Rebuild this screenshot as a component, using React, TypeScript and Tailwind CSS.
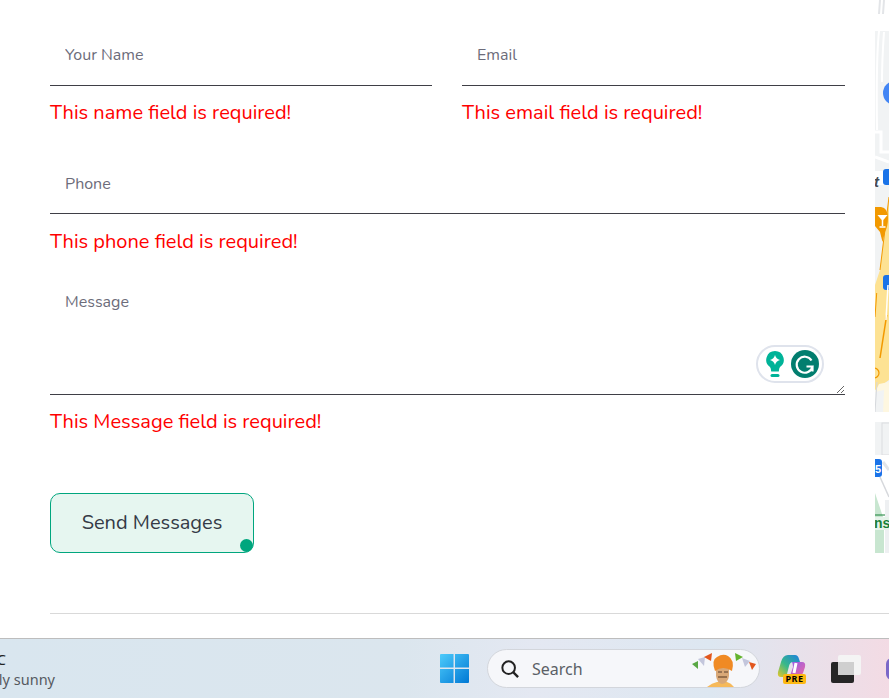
const FieldError = ({ children }: { children: React.ReactNode }) => (
  <p className="mt-[12px] h-[30px] text-[20px] leading-[30px] text-[#ff0000]">{children}</p>
);

const inputClass =
  "block w-full border-b border-[#3f3f46] bg-white pl-[15px] text-[16px] text-[#333] outline-none placeholder:text-[#6c6c7a]";

const MapStrip = () => (
  <svg width="14" height="553" viewBox="0 0 14 553" className="block shrink-0">
    <rect width="14" height="553" fill="#f1f3f4" />
    <rect width="14" height="31" fill="#ffffff" />
    <path d="M5 0 L4 14 M9 0 L8 14" stroke="#e3e5e8" strokeWidth="2" fill="none" />
    <path d="M4 31 Q1 60 2 130 M9 32 Q7 60 7 82" stroke="#ffffff" strokeWidth="2" fill="none" />
    <circle cx="20" cy="93" r="12" fill="#4285f4" />
    <path d="M0 132 H6 V152 H14 M0 157 L14 162" stroke="#ffffff" strokeWidth="3" fill="none" />
    <path d="M0 178 H14" stroke="#ffffff" strokeWidth="14" />
    <text x="-1" y="187" fontSize="15" fontStyle="italic" fontWeight="700" fontFamily="Liberation Sans, sans-serif" fill="#444b52">t</text>
    <rect x="8" y="169" width="10" height="16" rx="3" fill="#1a73e8" />
    <path d="M14 197 L5 270 L0 285 V390 L14 380 Z" fill="#fde293" />
    <path d="M14 197 L5 270" stroke="#f29900" strokeWidth="1" fill="none" />
    <path d="M0 207 H6 Q13 208 13 218 Q13 226 10 232 L7.500 242 L5 232 L0 226 Z" fill="#f29900" />
    <path d="M2.500 215 H12.500 L7.500 221 Z" fill="#ffffff" />
    <path d="M7.500 220 V226 M4.500 227 H10.500" stroke="#ffffff" strokeWidth="1.500" fill="none" />
    <rect x="8" y="275" width="10" height="15" rx="3" fill="#1a73e8" />
    <path d="M1.700 293 L0 317" stroke="#f29900" strokeWidth="1" fill="none" />
    <path d="M11.700 315 L5 358" stroke="#f29900" strokeWidth="1.500" fill="none" />
    <path d="M13 285 L11 320" stroke="#ffffff" strokeWidth="1.500" fill="none" />
    <circle cx="-1" cy="373" r="5" fill="none" stroke="#f29900" strokeWidth="1.200" />
    <path d="M0 392 L4 384 L14 382 V414 H8 L9 390" fill="#fef7e0" />
    <path d="M2 382 L0 412" stroke="#d6d8dc" strokeWidth="1" />
    <path d="M0 412 H14 V422 H0 Z" fill="#ffffff" />
    <rect x="7" y="423" width="10" height="32" fill="#f1f3f4" stroke="#dcdde0" />
    <path d="M0 455 H14 V553 H0 Z" fill="#ffffff" />
    <rect x="-4" y="459" width="11" height="18" rx="3" fill="#1a73e8" />
    <text x="0" y="473" fontSize="11" fontWeight="700" fontFamily="Liberation Sans, sans-serif" fill="#ffffff">5</text>
    <path d="M5 477 L14 497" stroke="#d6d8dc" strokeWidth="1.500" />
    <path d="M8 462 L14 470" stroke="#e3e5e8" strokeWidth="3" />
    <path d="M0 493 L9 520 V553 H0 Z" fill="#c8e6d0" />
    <rect x="10" y="500" width="4" height="53" fill="#eef0f2" />
    <path d="M0 515 H10" stroke="#188038" strokeWidth="1" />
    <rect x="0" y="517" width="14" height="13" fill="#e6f3ea" />
    <text x="-1" y="528" fontSize="14" fontWeight="700" fontFamily="Liberation Sans, sans-serif" fill="#188038">ns</text>
  </svg>
);

const GrammarlyBadge = () => (
  <div className="absolute right-[21px] bottom-[12px] flex h-[38px] w-[68px] items-center justify-between rounded-full border-2 border-[#dfe3ec] bg-white pr-[3px] pl-[8px]">
    <svg width="18" height="28" viewBox="0 0 18 28">
      <path d="M9 1 a8.800 8.800 0 0 1 5 16 q-1 1 -1.200 4.500 h-7.600 q-.2 -3.500 -1.200 -4.500 A8.800 8.800 0 0 1 9 1 Z" fill="#00b398" />
      <path d="M9 5 Q10 9 14 10 Q10 11 9 15 Q8 11 4 10 Q8 9 9 5 Z" fill="#ffffff" />
      <rect x="4.500" y="24" width="9" height="3" rx="1.500" fill="#00b398" />
    </svg>
    <svg width="28" height="28" viewBox="0 0 28 28">
      <circle cx="14" cy="14" r="14" fill="#027e6f" />
      <path d="M20.500 10.500 A8 8 0 1 0 21.500 16.500 H15.500 M21.500 16.500 V21.500" stroke="#ffffff" strokeWidth="2.200" fill="none" />
    </svg>
  </div>
);

// festive bunting and portrait on the right of the search pill
const Figure = () => (
  <svg width="68" height="37" viewBox="0 0 68 37" className="shrink-0">
    <path d="M2 14 L8 11 L8 19 Z" fill="#5aa845" />
    <path d="M8 9 L15 7 L14 16 Z" fill="#c3c6dc" />
    <path d="M14 7 L22 3 L21 11 Z" fill="#e2571e" />
    <path d="M45 3 L53 7 L46 11 Z" fill="#63b32e" />
    <path d="M52 8 L60 11 L55 17 Z" fill="#c3c6dc" />
    <path d="M59 12 L66 14 L62 20 Z" fill="#e2571e" />
    <path d="M17 37 Q22 33 27 32 H37 Q41 33 44 37 Z" fill="#f6b95a" />
    <path d="M26 18 H39 V26 Q38 33 32 34 Q27 33 26 26 Z" fill="#d9a877" />
    <path d="M28 27 H37" stroke="#6b4a30" strokeWidth="1.200" />
    <path d="M28 22 H32 M34 22 H38" stroke="#5a4030" strokeWidth="1" />
    <path d="M25 21 Q21 10 27 7 Q33 3 38 6 Q45 10 42 21 Q33 15 25 21 Z" fill="#f08a24" />
  </svg>
);

const CopilotIcon = () => (
  <div className="relative h-[30px] w-[29px]">
    <svg width="29" height="24" viewBox="0 0 29 24" className="block">
      <defs>
        <linearGradient id="copA" x1="0" y1="1" x2="1" y2="0">
          <stop offset="0" stopColor="#e8c828" />
          <stop offset="0.45" stopColor="#38b88a" />
          <stop offset="1" stopColor="#1c7fe0" />
        </linearGradient>
        <linearGradient id="copB" x1="0" y1="0" x2="1" y2="1">
          <stop offset="0" stopColor="#8c5cf0" />
          <stop offset="1" stopColor="#f06aa0" />
        </linearGradient>
      </defs>
      <path d="M11 1 H18 Q21 1 22 5 L23 8 H16 Q13 8 12 12 L10 20 Q9 23 6 23 H4 Q0 23 1 18 L4 8 Q6 1 11 1 Z" fill="url(#copA)" />
      <path d="M15 8 H25 Q29 8 28 13 L26 19 Q24 23 20 23 H11 Q13 22 14 19 L16 13 Q16 10 15 8 Z" fill="url(#copB)" />
      <path d="M19 9 L17 19" stroke="#ffffff" strokeWidth="3" />
    </svg>
    <span className="absolute right-0 bottom-0 flex h-[10px] w-[23px] items-center justify-center rounded-[2px] bg-[#fdb913] text-[9px] leading-none font-bold tracking-[0.5px] text-black">
      PRE
    </span>
  </div>
);

export default function App() {
  return (
    <div className="relative h-[698px] w-[889px] overflow-hidden bg-white font-['Nunito','Lato','Noto_Sans',sans-serif]">
      <div className="flex h-[553px]">
        <form className="w-[875px] shrink-0 pt-[25px] pr-[30px] pl-[50px]">
          <div className="grid grid-cols-[382px_383px] gap-x-[30px]">
            <div>
              <input className={`${inputClass} h-[61px]`} placeholder="Your Name" />
              <FieldError>This name field is required!</FieldError>
            </div>
            <div>
              <input className={`${inputClass} h-[61px]`} placeholder="Email" />
              <FieldError>This email field is required!</FieldError>
            </div>
          </div>
          <div className="mt-[26px]">
            <input className={`${inputClass} h-[60px]`} placeholder="Phone" />
            <div className="pt-px">
              <FieldError>This phone field is required!</FieldError>
            </div>
          </div>
          <div className="relative mt-[27px]">
            <textarea
              className="block h-[111px] w-full border-b border-[#3f3f46] bg-white pt-[6px] pl-[15px] text-[16px] text-[#333] outline-none placeholder:text-[#6c6c7a]"
              placeholder="Message"
            />
            <GrammarlyBadge />
          </div>
          <FieldError>This Message field is required!</FieldError>
          <button
            type="button"
            className="relative mt-[56px] h-[60px] w-[204px] rounded-[10px] border border-[#00a67e] bg-[#e6f6f0] text-[20px] text-[#343a46]"
          >
            Send Messages
            <span className="absolute right-0 bottom-0 h-[13px] w-[13px] rounded-full bg-[#00a67e]" />
          </button>
        </form>
        <MapStrip />
      </div>
      <div className="mt-[60px] ml-[50px] h-px bg-[#d9d9d9]" />
      <footer className="mt-[24px] flex h-[60px] items-center overflow-hidden border-t border-[#bdbdbd] bg-[linear-gradient(90deg,#d9e6ef_0%,#dbe6ee_45%,#e4e8f2_60%,#dde7f1_80%,#f3dbe4_100%)] font-['Noto_Sans',sans-serif]">
        <div className="-ml-[93px] w-[148px] shrink-0 text-right">
          <p className="h-[20px] pr-[49px] text-[14.500px] leading-[20px] text-[#222]">32°C</p>
          <p className="text-[14.500px] leading-[20px] whitespace-nowrap text-[#55595f]">Partly sunny</p>
        </div>
        <svg width="29" height="29" viewBox="0 0 30 30" className="ml-[385px] shrink-0">
          <defs>
            <linearGradient id="winA" x1="0" y1="0" x2="1" y2="1">
              <stop offset="0" stopColor="#4dcbfb" />
              <stop offset="1" stopColor="#0078d4" />
            </linearGradient>
          </defs>
          <path d="M1 0 H14 V14 H0 V1 Q0 0 1 0 Z M15.500 0 H29 Q30 0 30 1 V14 H15.500 Z M0 15.500 H14 V30 H1 Q0 30 0 29 Z M15.500 15.500 H30 V29 Q30 30 29 30 H15.500 Z" fill="url(#winA)" />
        </svg>
        <div className="ml-[18px] flex h-[39px] w-[273px] shrink-0 items-center rounded-full border border-[#d3d6dc] bg-[#f6f7fa] pl-[13px] text-[16px] text-[#5b5f66]">
          <svg width="18" height="18" viewBox="0 0 20 20" className="shrink-0">
            <circle cx="8.500" cy="8.500" r="7" fill="none" stroke="#222" strokeWidth="2.200" />
            <path d="M13.500 13.500 L19 19" stroke="#222" strokeWidth="2.600" />
          </svg>
          <span className="ml-[13px] w-[158px] shrink-0">Search</span>
          <Figure />
        </div>
        <div className="ml-[17px] shrink-0">
          <CopilotIcon />
        </div>
        <div className="relative ml-[25px] h-[28px] w-[30px] shrink-0">
          <div className="absolute top-0 right-0 h-[20px] w-[23px] rounded-[2px] bg-[#f4f4f4]" />
          <div className="absolute bottom-0 left-0 h-[21px] w-[23px] rounded-[2px] bg-[#262626]" />
          <div className="absolute top-[7px] left-[7px] h-[13px] w-[16px] bg-[#cfcfcf]" />
        </div>
        <div className="ml-[25px] h-[22px] w-[12px] shrink-0 rounded-full bg-[#7b68c8]" />
      </footer>
    </div>
  );
}
